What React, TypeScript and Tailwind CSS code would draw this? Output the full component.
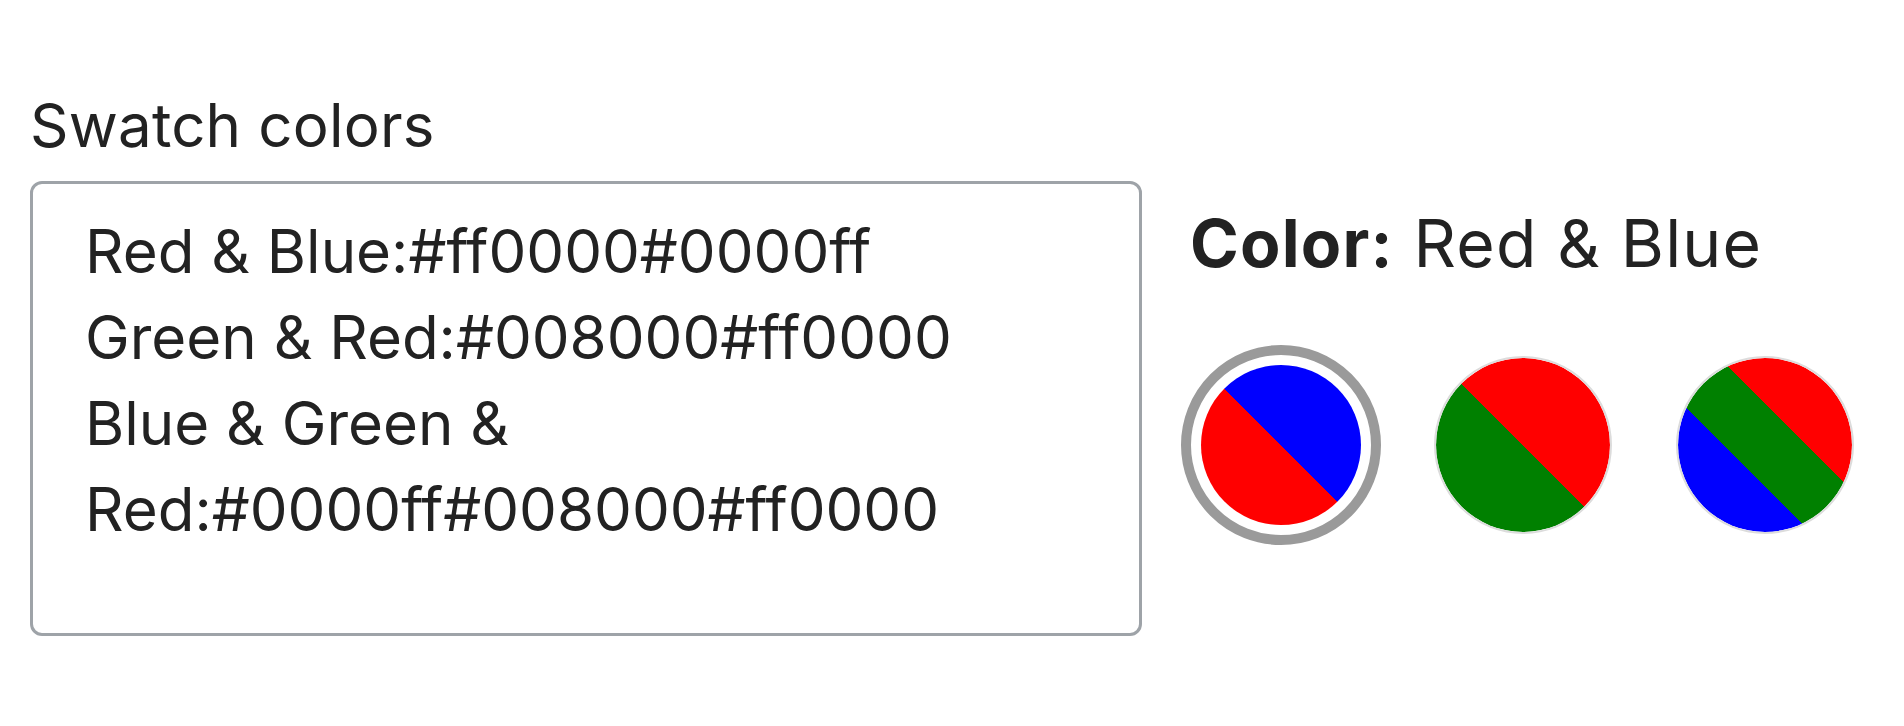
import React from "react";

const swatches = [
  { name: "Red & Blue", bg: "linear-gradient(45deg, #ff0000 50%, #0000ff 50%)" },
  { name: "Green & Red", bg: "linear-gradient(45deg, #008000 50%, #ff0000 50%)" },
  {
    name: "Blue & Green & Red",
    bg: "linear-gradient(45deg, #0000ff 38.2%, #008000 38.2%, #008000 61.8%, #ff0000 61.8%)",
  },
];

const text =
  "Red & Blue:#ff0000#0000ff\nGreen & Red:#008000#ff0000\nBlue & Green & Red:#0000ff#008000#ff0000";

export default function App() {
  return (
    <div className="w-[1904px] h-[726px] bg-white pl-[30px] pt-[89px] text-[#222222]">
      <div className="font-['Inter',sans-serif] text-[60px] leading-[72px] tracking-[0.2px]">Swatch colors</div>
      <div className="mt-[20px] flex items-start">
        <textarea
          readOnly
          defaultValue={text}
          className="block w-[1112px] h-[455px] resize-none overflow-hidden rounded-[12px] border-[3px] border-[#9ea3a8] bg-white pl-[52px] pr-[40px] pt-[24px] font-['Inter',sans-serif] text-[60px] leading-[86px] tracking-[0px] text-[#222222] outline-none"
        />
        <div className="ml-[39px] pt-[24px] flex flex-col">
          <div className="pl-[9px] font-['Inter',sans-serif] text-[66px] leading-[77px] tracking-[1.2px] whitespace-nowrap">
            <span className="font-bold">Color:</span> Red &amp; Blue
          </div>
          <div className="mt-[63px] flex gap-[42px]">
            {swatches.map((s, i) => (
              <div key={s.name} className="w-[200px] h-[200px] flex items-center justify-center">
                {i === 0 ? (
                  <div className="w-[200px] h-[200px] rounded-full border-[10px] border-[#9a9a9a] bg-white p-[10px]">
                    <div className="w-full h-full rounded-full" style={{ background: s.bg }} />
                  </div>
                ) : (
                  <div className="w-[178px] h-[178px] rounded-full border-2 border-[#dcdcdc] overflow-hidden">
                    <div className="w-full h-full rounded-full" style={{ background: s.bg }} />
                  </div>
                )}
              </div>
            ))}
          </div>
        </div>
      </div>
    </div>
  );
}
